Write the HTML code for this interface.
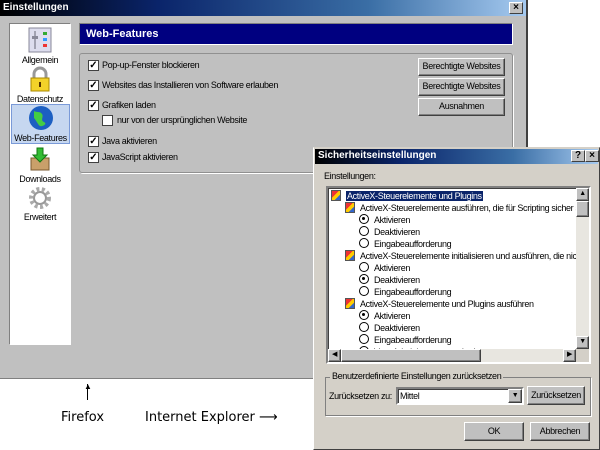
<!DOCTYPE html>
<html><head><meta charset="utf-8"><style>
*{box-sizing:border-box;margin:0;padding:0}
body{width:600px;height:450px;background:#fff;position:relative;overflow:hidden;font-family:"Liberation Sans",sans-serif;font-size:9px;letter-spacing:-0.35px;color:#000}
.abs{position:absolute;white-space:nowrap}
.ff{left:0;top:0;width:528px;height:379px;background:#c0c0c0;border-right:2px solid #404040;border-bottom:1px solid #808080}
.tb{left:0;top:0;height:16px;background:linear-gradient(90deg,#000 0%,#0a246a 30%,#3a6ea5 70%,#a6caf0 100%);color:#fff;font-weight:bold;font-size:10px;letter-spacing:0;padding:2px 3px}
.xb{width:14px;height:12px;background:#c0c0c0;border:1px solid;border-color:#fff #404040 #404040 #fff;font-size:10px;line-height:10px;text-align:center;color:#000;font-weight:bold;letter-spacing:0}
.side{left:9px;top:23px;width:62px;height:322px;background:#fff;border:1px solid;border-color:#808080 #fff #fff #808080}
.it{position:absolute;left:0;width:60px;text-align:center;font-size:9px;white-space:nowrap}
.cb{position:absolute;width:11px;height:11px;background:#fff;border:1px solid #404040;font-size:10px;line-height:9px;text-align:center;font-weight:bold;letter-spacing:0}
.lbl{position:absolute;font-size:9px;white-space:nowrap}
.btn{position:absolute;background:#c0c0c0;border:1px solid;border-color:#fff #404040 #404040 #fff;box-shadow:inset -1px -1px #808080;text-align:center;font-size:9px;white-space:nowrap}
.rad{display:inline-block;width:10px;height:10px;border:1.5px solid #000;border-radius:50%;vertical-align:-1px;margin-right:5px;position:relative}
.rad.on::after{content:"";position:absolute;left:2px;top:2px;width:3px;height:3px;background:#000;border-radius:50%}
.row{position:absolute;white-space:nowrap;font-size:9px}
.ico{display:inline-block;width:10px;height:11px;border:1px solid #555;background:linear-gradient(135deg,#e33 0 40%,#fc0 40% 70%,#36c 70%);vertical-align:-2px;margin-right:5px}
</style></head><body>
<div class="abs ff">
 <div class="abs tb" style="width:526px">Einstellungen</div>
 <div class="abs xb" style="left:509px;top:2px">×</div>
 <div class="abs side">
  <div class="it" style="top:3px"><svg width="24" height="26"><rect x="1" y="1" width="22" height="24" fill="#dde" stroke="#889"/><line x1="7" y1="4" x2="7" y2="22" stroke="#667"/><rect x="4" y="9" width="6" height="3" fill="#889"/><rect x="15" y="5" width="4" height="3" fill="#3a3"/><rect x="15" y="11" width="4" height="3" fill="#39f"/><rect x="15" y="17" width="4" height="3" fill="#e33"/></svg><br>Allgemein</div>
  <div class="it" style="top:42px"><svg width="24" height="26"><path d="M6 12V8a6 6 0 0 1 12 0v4" fill="none" stroke="#999" stroke-width="3"/><rect x="3" y="12" width="18" height="13" fill="#f3d22a" stroke="#a80"/><rect x="11" y="16" width="2" height="5" fill="#530"/></svg><br>Datenschutz</div>
  <div class="it" style="top:80px;left:1px;width:59px;height:40px;background:#c6d7f0;border:1px solid #7a9ad8"><svg width="26" height="26"><circle cx="13" cy="13" r="12" fill="#1c5fc2"/><path d="M6 6c4 2 6 0 8 3s-2 6 2 8-2 5-4 4-4-6-6-8z" fill="#4c4"/></svg><br>Web-Features</div>
  <div class="it" style="top:122px"><svg width="24" height="26"><rect x="3" y="12" width="18" height="12" fill="#c9a06a" stroke="#7a5a30"/><path d="M9 2h6v7h4l-7 7-7-7h4z" fill="#3b3" stroke="#171"/></svg><br>Downloads</div>
  <div class="it" style="top:162px"><svg width="24" height="24"><circle cx="12" cy="12" r="9" fill="none" stroke="#aaa" stroke-width="4" stroke-dasharray="3 2.5"/><circle cx="12" cy="12" r="6" fill="none" stroke="#999" stroke-width="2"/></svg><br>Erweitert</div>
 </div>
 <div class="abs" style="left:79px;top:23px;width:434px;height:22px;background:#000080;color:#fff;font-weight:bold;font-size:11px;letter-spacing:0;padding:4px 6px;border:1px solid;border-color:#808080 #fff #fff #808080">Web-Features</div>
 <div class="abs" style="left:79px;top:53px;width:434px;height:120px;border:1px solid #909090;border-radius:3px;box-shadow:1px 1px #fff"></div>
 <div class="cb" style="left:88px;top:60px">✓</div><div class="lbl" style="left:102px;top:60px">Pop-up-Fenster blockieren</div>
 <div class="cb" style="left:88px;top:80px">✓</div><div class="lbl" style="left:102px;top:80px">Websites das Installieren von Software erlauben</div>
 <div class="cb" style="left:88px;top:100px">✓</div><div class="lbl" style="left:102px;top:100px">Grafiken laden</div>
 <div class="cb" style="left:102px;top:115px"></div><div class="lbl" style="left:117px;top:115px">nur von der ursprünglichen Website</div>
 <div class="cb" style="left:88px;top:136px">✓</div><div class="lbl" style="left:102px;top:136px">Java aktivieren</div>
 <div class="cb" style="left:88px;top:152px">✓</div><div class="lbl" style="left:102px;top:152px">JavaScript aktivieren</div>
 <div class="btn" style="left:418px;top:58px;width:87px;height:18px;line-height:15px">Berechtigte Websites</div>
 <div class="btn" style="left:418px;top:78px;width:87px;height:18px;line-height:15px">Berechtigte Websites</div>
 <div class="btn" style="left:418px;top:98px;width:87px;height:18px;line-height:15px">Ausnahmen</div>
</div>
<div class="abs" style="left:87px;top:384px;width:1px;height:16px;background:#000"></div>
<div class="abs" style="left:84px;top:383px;font-size:8px;line-height:8px">▲</div>
<div class="abs" style="left:61px;top:410px;font-family:'DejaVu Sans',sans-serif;font-size:13px;letter-spacing:0">Firefox</div>
<div class="abs" style="left:145px;top:410px;font-family:'DejaVu Sans',sans-serif;font-size:13px;letter-spacing:0">Internet Explorer ⟶</div>

<div class="abs" style="left:313px;top:147px;width:287px;height:303px;background:#d4d0c8;border:1px solid;border-color:#d4d0c8 #404040 #404040 #fff">
 <div class="abs tb" style="left:1px;top:1px;width:283px;height:15px;padding:1px 3px">Sicherheitseinstellungen</div>
 <div class="abs xb" style="left:257px;top:2px">?</div><div class="abs xb" style="left:271px;top:2px">×</div>
 <div class="abs" style="left:10px;top:23px">Einstellungen:</div>
 <div class="abs" style="left:12px;top:38px;width:265px;height:178px;background:#fff;border:2px solid;border-color:#808080 #fff #fff #808080;box-shadow:inset 1px 1px #404040;overflow:hidden">
  <div class="row" style="left:3px;top:2px"><span class="ico"></span><span style="background:#0a246a;color:#fff;padding:0 1px">ActiveX-Steuerelemente und Plugins</span></div>
  <div class="row" style="left:17px;top:14px"><span class="ico"></span>ActiveX-Steuerelemente ausführen, die für Scripting sicher sind</div>
  <div class="row" style="left:31px;top:26px"><span class="rad on"></span>Aktivieren</div>
  <div class="row" style="left:31px;top:38px"><span class="rad"></span>Deaktivieren</div>
  <div class="row" style="left:31px;top:50px"><span class="rad"></span>Eingabeaufforderung</div>
  <div class="row" style="left:17px;top:62px"><span class="ico"></span>ActiveX-Steuerelemente initialisieren und ausführen, die nicht</div>
  <div class="row" style="left:31px;top:74px"><span class="rad"></span>Aktivieren</div>
  <div class="row" style="left:31px;top:86px"><span class="rad on"></span>Deaktivieren</div>
  <div class="row" style="left:31px;top:98px"><span class="rad"></span>Eingabeaufforderung</div>
  <div class="row" style="left:17px;top:110px"><span class="ico"></span>ActiveX-Steuerelemente und Plugins ausführen</div>
  <div class="row" style="left:31px;top:122px"><span class="rad on"></span>Aktivieren</div>
  <div class="row" style="left:31px;top:134px"><span class="rad"></span>Deaktivieren</div>
  <div class="row" style="left:31px;top:146px"><span class="rad"></span>Eingabeaufforderung</div>
  <div class="row" style="left:31px;top:158px"><span class="rad"></span>Vom Administrator genehmigt</div>
  <div class="abs" style="right:0;top:0;width:13px;height:161px;background:#e8e6e0"></div>
  <div class="btn" style="right:0;top:0;width:13px;height:13px;font-size:7px;line-height:10px">▲</div>
  <div class="btn" style="right:0;top:13px;width:13px;height:16px"></div>
  <div class="btn" style="right:0;top:148px;width:13px;height:13px;font-size:7px;line-height:10px">▼</div>
  <div class="abs" style="left:0;top:161px;width:261px;height:13px;background:#e8e6e0"></div>
  <div class="btn" style="left:0;top:161px;width:13px;height:13px;font-size:7px;line-height:10px">◀</div>
  <div class="btn" style="left:13px;top:161px;width:140px;height:13px"></div>
  <div class="btn" style="left:235px;top:161px;width:13px;height:13px;font-size:7px;line-height:10px">▶</div>
  <div class="abs" style="left:248px;top:161px;width:13px;height:13px;background:#d4d0c8"></div>
 </div>
 <div class="abs" style="left:11px;top:229px;width:266px;height:39px;border:1px solid #808080;box-shadow:1px 1px #fff"></div>
 <div class="abs" style="left:16px;top:223px;background:#d4d0c8;padding:0 2px">Benutzerdefinierte Einstellungen zurücksetzen</div>
 <div class="abs" style="left:15px;top:243px">Zurücksetzen zu:</div>
 <div class="abs" style="left:82px;top:239px;width:128px;height:18px;background:#fff;border:2px solid;border-color:#808080 #fff #fff #808080;box-shadow:inset 1px 1px #404040;padding:2px 2px">Mittel</div>
 <div class="btn" style="left:194px;top:241px;width:14px;height:14px;font-size:7px;line-height:11px">▼</div>
 <div class="btn" style="left:213px;top:238px;width:58px;height:19px;line-height:16px">Zurücksetzen</div>
 <div class="btn" style="left:150px;top:274px;width:60px;height:19px;line-height:16px">OK</div>
 <div class="btn" style="left:216px;top:274px;width:60px;height:19px;line-height:16px">Abbrechen</div>
</div>
</body></html>
